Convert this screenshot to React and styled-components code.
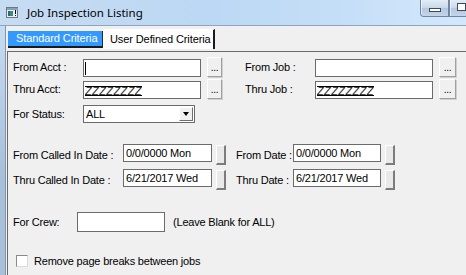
import React from "react";
import styled, { createGlobalStyle } from "styled-components";

const Global = createGlobalStyle`
  html, body { margin: 0; padding: 0; overflow: hidden; }
  body { width: 466px; height: 275px; font-family: "Liberation Sans", Arial, sans-serif; font-size: 11px; color: #000; letter-spacing: -0.2px; }
`;

const Window = styled.div`
  width: 466px;
  height: 275px;
  display: flex;
  flex-direction: column;
  overflow: hidden;
  background: #f0f0f0;
`;

const TitleBar = styled.div`
  height: 25px;
  flex: none;
  display: flex;
  align-items: flex-start;
  background: linear-gradient(90deg, #c6dcf1 0%, #bcd8f4 45%, #c6dff8 75%, #d4e8fb 100%);
  border-bottom: 1px solid #8ea4bf;
`;

const AppIcon = styled.svg`
  margin: 7px 0 0 6px;
  flex: none;
`;

const Title = styled.div`
  margin: 4px 0 0 9px;
  font-family: "Noto Sans", "Open Sans", sans-serif;
  font-size: 11.5px;
  letter-spacing: 0;
  line-height: 17px;
  color: #000;
`;

const Caption = styled.div`
  margin-left: auto;
  display: flex;
`;

const CaptionButton = styled.div`
  width: ${(p) => p.$w}px;
  height: 17px;
  box-sizing: border-box;
  border: 1px solid #6f86a3;
  border-top: none;
  border-right: ${(p) => (p.$last ? "none" : "1px solid #6f86a3")};
  border-bottom-left-radius: ${(p) => (p.$first ? "4px" : "0")};
  background: linear-gradient(180deg, #e3ecf6 0%, #c9d8ea 50%, #b4c7de 51%, #c4d5e8 100%);
  box-shadow: inset 1px 0 0 rgba(255,255,255,0.6);
  display: flex;
  align-items: center;
  justify-content: ${(p) => (p.$last ? "flex-start" : "center")};
  padding-left: ${(p) => (p.$last ? "7px" : "0")};
`;

const CapGlyph = styled.div`
  width: ${(p) => p.$w}px;
  height: ${(p) => p.$h}px;
  box-sizing: border-box;
  border: 1px solid #3b4a5e;
  background: #fff;
  margin-top: ${(p) => p.$mt}px;
`;

const Body = styled.div`
  flex: 1;
  display: flex;
  min-height: 0;
`;

const LeftFrame = styled.div`
  width: 5px;
  flex: none;
  background: linear-gradient(180deg, #c8dcf1 0%, #b7cde6 30%, #a8bfda 60%, #a9c0db 100%);
  border-right: 1px solid #8496ad;
`;

const Content = styled.div`
  flex: 1;
  display: flex;
  flex-direction: column;
  background: #f0f0f0;
`;

const TabRow = styled.div`
  display: flex;
  align-items: flex-start;
  margin: 3px 0 0 2px;
  height: 20px;
`;

const Tab = styled.div`
  box-sizing: border-box;
  width: ${(p) => p.$w}px;
  height: ${(p) => (p.$active ? 17 : 20)}px;
  margin-top: ${(p) => (p.$active ? 2 : 0)}px;
  padding-left: ${(p) => p.$pad}px;
  background: ${(p) => (p.$active ? "#3399ff" : "#fdfdfd")};
  color: ${(p) => (p.$active ? "#fff" : "#000")};
  border-bottom: ${(p) => (p.$active ? "2px solid #1a1a1a" : "none")};
  border-right: ${(p) => (p.$active ? "1px solid #2a2a2a" : "2px solid #1a1a1a")};
  border-top: ${(p) => (p.$active ? "none" : "1px solid #ffffff")};
  font-size: 11px;
  letter-spacing: -0.1px;
  line-height: ${(p) => (p.$active ? 15 : 19)}px;
  white-space: nowrap;
`;

const Panel = styled.div`
  flex: 1;
  margin: 2px 0 0 1px;
  border-top: 1px solid #6a6a6a;
  border-left: 1px solid #6a6a6a;
  padding-left: 5px;
  display: flex;
  flex-direction: column;
`;

const Row = styled.div`
  display: flex;
  align-items: ${(p) => p.$align || "center"};
  height: ${(p) => p.$h}px;
  margin-top: ${(p) => p.$mt}px;
  flex: none;
`;

const Label = styled.div`
  width: ${(p) => p.$w}px;
  margin-left: ${(p) => p.$ml || 0}px;
  flex: none;
  white-space: nowrap;
  align-self: center;
`;

const TextBox = styled.div`
  box-sizing: border-box;
  width: ${(p) => p.$w}px;
  height: ${(p) => p.$h || 18}px;
  flex: none;
  background: #fff;
  border: 1px solid #6b6b6b;
  padding-left: ${(p) => p.$pl || 1}px;
  display: flex;
  align-items: center;
  white-space: nowrap;
  overflow: hidden;
`;

const Caret = styled.span`
  width: 1px;
  height: 13px;
  background: #000;
  display: inline-block;
`;

const Hatch = styled.span`
  display: inline-block;
  box-sizing: border-box;
  height: 10px;
  margin-top: 1px;
  border-top: 1px solid #000;
  border-bottom: 1px solid #000;
  font-style: italic;
  font-size: 11px;
  font-weight: 300;
  letter-spacing: 0.4px;
  line-height: 9px;
  color: #222;
  overflow: hidden;
`;

const DotsButton = styled.div`
  box-sizing: border-box;
  width: ${(p) => p.$w}px;
  height: 20px;
  margin-left: 6px;
  flex: none;
  background: #f0f0f0;
  border-top: 1px solid #fff;
  border-left: 1px solid #fff;
  border-right: 1px solid #a0a0a0;
  border-bottom: 1px solid #a0a0a0;
  box-shadow: 1px 1px 0 #d0d0d0;
  display: flex;
  align-items: flex-end;
  justify-content: center;
  padding-bottom: 3px;
  font-size: 10px;
  line-height: 10px;
`;

const SpinButton = styled.div`
  box-sizing: border-box;
  width: 10px;
  height: 20px;
  margin-left: 4px;
  margin-top: 1px;
  flex: none;
  background: #e9e9e9;
  border-top: 1px solid #fff;
  border-left: 1px solid #fff;
  border-right: 2px solid #7c7c7c;
  border-bottom: 2px solid #7c7c7c;
`;

const Select = styled.div`
  box-sizing: border-box;
  width: 112px;
  height: 18px;
  background: #fff;
  border: 1px solid #6b6b6b;
  display: flex;
  align-items: center;
  padding-left: 2px;
  flex: none;
`;

const SelectValue = styled.span`
  flex: 1;
`;

const DropButton = styled.div`
  box-sizing: border-box;
  width: 14px;
  height: 14px;
  margin-right: 1px;
  background: #f0f0f0;
  border-top: 1px solid #fff;
  border-left: 1px solid #fff;
  border-right: 1px solid #6e6e6e;
  border-bottom: 1px solid #6e6e6e;
  display: flex;
  align-items: center;
  justify-content: center;
`;

const Arrow = styled.div`
  width: 0;
  height: 0;
  border-left: 3.5px solid transparent;
  border-right: 3.5px solid transparent;
  border-top: 4px solid #000;
`;

const Note = styled.div`
  margin-left: 8px;
  white-space: nowrap;
`;

const CheckBox = styled.div`
  box-sizing: border-box;
  width: 12px;
  height: 12px;
  margin-left: 3px;
  background: #fff;
  border-top: 1px solid #8a8a8a;
  border-left: 1px solid #8a8a8a;
  border-right: 1px solid #dcdcdc;
  border-bottom: 1px solid #dcdcdc;
  flex: none;
`;

const CheckLabel = styled.div`
  margin-left: 6px;
  white-space: nowrap;
`;

function LookupField({ label, lw, ml, children, bw }) {
  return (
    <>
      <Label $w={lw} $ml={ml}>{label}</Label>
      <TextBox $w={118}>{children}</TextBox>
      <DotsButton $w={bw}>...</DotsButton>
    </>
  );
}

function DateField({ label, lw, ml, w, value }) {
  return (
    <>
      <Label $w={lw} $ml={ml}>{label}</Label>
      <TextBox $w={w} $pl={2}>{value}</TextBox>
      <SpinButton />
    </>
  );
}

export default function App() {
  return (
    <Window>
      <Global />
      <TitleBar>
        <AppIcon width="12" height="11" viewBox="0 0 12 11">
          <rect x="0.5" y="0.5" width="11" height="10" fill="#e8eef4" stroke="#6c7888" />
          <rect x="1" y="1" width="11" height="2" fill="#8aa0b8" />
          <rect x="2" y="4" width="5" height="5" fill="#3f8a78" />
          <rect x="2" y="4" width="2" height="5" fill="#2b6b82" />
          <rect x="9" y="3" width="1" height="4" fill="#111" />
          <rect x="9" y="8" width="1" height="1" fill="#111" />
        </AppIcon>
        <Title>Job Inspection Listing</Title>
        <Caption>
          <CaptionButton $w={29} $first>
            <CapGlyph $w={12} $h={4} $mt={3} />
          </CaptionButton>
          <CaptionButton $w={17} $last>
            <CapGlyph $w={10} $h={8} $mt={-2} />
          </CaptionButton>
        </Caption>
      </TitleBar>
      <Body>
        <LeftFrame />
        <Content>
          <TabRow>
            <Tab $active $w={95} $pad={8}>Standard Criteria</Tab>
            <Tab $w={112} $pad={7}>User Defined Criteria</Tab>
          </TabRow>
          <Panel>
            <Row $h={20} $mt={5} $align="flex-end">
              <LookupField label="From Acct :" lw={70} bw={15}>
                <Caret />
              </LookupField>
              <LookupField label="From Job :" lw={70} ml={23} bw={17} />
            </Row>
            <Row $h={20} $mt={2} $align="flex-end">
              <LookupField label="Thru Acct:" lw={70} bw={15}>
                <Hatch>ZZZZZZZZ</Hatch>
              </LookupField>
              <LookupField label="Thru Job :" lw={70} ml={23} bw={17}>
                <Hatch>ZZZZZZZZ</Hatch>
              </LookupField>
            </Row>
            <Row $h={18} $mt={6}>
              <Label $w={70}>For Status:</Label>
              <Select>
                <SelectValue>ALL</SelectValue>
                <DropButton>
                  <Arrow />
                </DropButton>
              </Select>
            </Row>
            <Row $h={21} $mt={21} $align="flex-start">
              <DateField label="From Called In Date :" lw={110} w={89} value="0/0/0000 Mon" />
              <DateField label="From Date :" lw={57} ml={10} w={88} value="0/0/0000 Mon" />
            </Row>
            <Row $h={21} $mt={4} $align="flex-start">
              <DateField label="Thru Called In Date :" lw={110} w={89} value="6/21/2017 Wed" />
              <DateField label="Thru Date :" lw={57} ml={10} w={88} value="6/21/2017 Wed" />
            </Row>
            <Row $h={20} $mt={22}>
              <Label $w={64}>For Crew:</Label>
              <TextBox $w={88} $h={20} />
              <Note>(Leave Blank for ALL)</Note>
            </Row>
            <Row $h={13} $mt={22}>
              <CheckBox />
              <CheckLabel>Remove page breaks between jobs</CheckLabel>
            </Row>
          </Panel>
        </Content>
      </Body>
    </Window>
  );
}
